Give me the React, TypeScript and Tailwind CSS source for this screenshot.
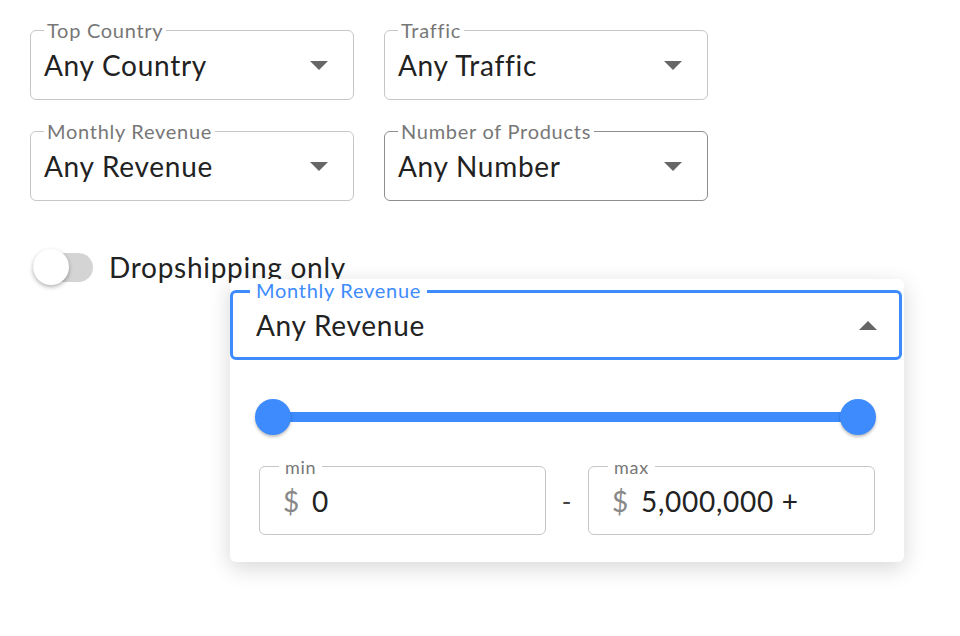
import React from "react";

const font = { fontFamily: "Lato, 'Noto Sans', sans-serif" };

const Arrow = ({ up = false }: { up?: boolean }) => (
  <svg width="18" height="9" viewBox="0 0 18 9" className="shrink-0">
    <polygon points={up ? "0,9 18,9 9,0" : "0,0 18,0 9,9"} fill="#666" />
  </svg>
);

const Select = ({ label, value, hover = false }: { label: string; value: string; hover?: boolean }) => (
  <div
    className={`relative flex h-[70px] items-center justify-between rounded-[6px] border bg-white pl-[13px] pr-[25px] ${
      hover ? "border-[#8e8e8e]" : "border-[#c6c6c6]"
    }`}
  >
    <span className="absolute -top-[11px] left-[13px] bg-white px-[3px] text-[20px] leading-[20px] text-[#777]">
      {label}
    </span>
    <span className="text-[28px] leading-[34px] text-[#222]">{value}</span>
    <Arrow />
  </div>
);

const MoneyField = ({ label, value }: { label: string; value: string }) => (
  <div className="relative flex h-[69px] flex-1 items-center gap-[12px] rounded-[6px] border border-[#c6c6c6] pl-[23px]">
    <span className="absolute -top-[10px] left-[19px] bg-white px-[6px] text-[18px] leading-[20px] text-[#777]">
      {label}
    </span>
    <span className="text-[28px] leading-[32px] text-[#888]">$</span>
    <span className="text-[28px] leading-[32px] text-[#222]">{value}</span>
  </div>
);

export default function App() {
  return (
    <div className="relative h-[636px] w-[960px] overflow-hidden bg-white tracking-[0.045em]" style={font}>
      <div className="grid w-[708px] grid-cols-2 gap-x-[30px] gap-y-[31px] pl-[30px] pt-[30px]">
        <Select label="Top Country" value="Any Country" />
        <Select label="Traffic" value="Any Traffic" />
        <Select label="Monthly Revenue" value="Any Revenue" />
        <Select label="Number of Products" value="Any Number" hover />
      </div>

      <div className="mt-[47px] flex items-center gap-[16px] pl-[33px]">
        <div className="relative h-[36px] w-[60px]">
          <div className="absolute left-0 top-[4px] h-[29px] w-[60px] rounded-full bg-[#d4d4d4]" />
          <div className="absolute left-0 top-0 h-[36px] w-[36px] rounded-full bg-white shadow-[0_2px_4px_rgba(0,0,0,0.3)]" />
        </div>
        <span className="text-[28px] leading-[38px] text-[#222]">Dropshipping only</span>
      </div>

      {/* open dropdown */}
      <div className="absolute left-[230px] top-[279px] w-[674px] rounded-[6px] bg-white pb-[27px] pt-[11px] shadow-[0_6px_22px_rgba(0,0,0,0.16)]">
        <div className="relative mr-[2px] flex h-[70px] items-center justify-between rounded-[6px] border-[3px] border-[#3d8bfd] pl-[23px] pr-[22px]">
          <span className="absolute -top-[13px] left-[17px] bg-white px-[6px] text-[20px] leading-[20px] text-[#3d8bfd]">
            Monthly Revenue
          </span>
          <span className="text-[28px] leading-[34px] text-[#222]">Any Revenue</span>
          <Arrow up />
        </div>

        <div className="relative ml-[25px] mr-[28px] mt-[39px] h-[36px]">
          <div className="absolute left-[18px] right-[18px] top-[13px] h-[10px] bg-[#3d8bfd]" />
          <div className="absolute left-0 top-0 h-[36px] w-[36px] rounded-full bg-[#3d8bfd] shadow-[0_2px_3px_rgba(0,0,0,0.25)]" />
          <div className="absolute right-0 top-0 h-[36px] w-[36px] rounded-full bg-[#3d8bfd] shadow-[0_2px_3px_rgba(0,0,0,0.25)]" />
        </div>

        <div className="mt-[31px] flex items-center px-[29px]">
          <MoneyField label="min" value="0" />
          <span className="w-[42px] text-center text-[26px] leading-[32px] text-[#444]">-</span>
          <MoneyField label="max" value="5,000,000 +" />
        </div>
      </div>
    </div>
  );
}
